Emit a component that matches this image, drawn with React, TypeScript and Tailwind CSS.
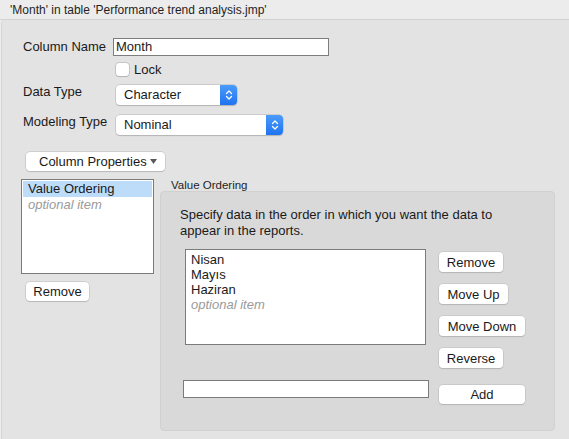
import React from 'react';

const font = { fontFamily: '"Liberation Sans", Arial, sans-serif' };

const Button: React.FC<{ label: string; className?: string }> = ({ label, className = '' }) => (
  <button
    className={`flex items-center justify-center rounded-[4px] bg-white text-[13px] leading-none text-[#1a1a1a] shadow-[0_0_0_0.5px_#b9b9b9,0_1px_1px_rgba(0,0,0,0.18)] ${className}`}
  >
    {label}
  </button>
);

const Select: React.FC<{ value: string; className?: string }> = ({ value, className = '' }) => (
  <div
    className={`flex h-[20px] items-stretch overflow-hidden rounded-[4px] bg-white shadow-[0_0_0_0.5px_#b4b4b4,0_1px_1px_rgba(0,0,0,0.2)] ${className}`}
  >
    <span className="flex flex-1 items-center pl-[8px] text-[13px] text-[#1a1a1a]">{value}</span>
    <span className="flex w-[17px] items-center justify-center bg-gradient-to-b from-[#4a9bfa] to-[#1f73f0]">
      <svg width="8" height="12" viewBox="0 0 8 12" fill="none">
        <path d="M1.5 4.5 4 2l2.5 2.5M1.5 7.5 4 10l2.5-2.5" stroke="white" strokeWidth="1.3" strokeLinecap="round" strokeLinejoin="round" />
      </svg>
    </span>
  </div>
);

const App: React.FC = () => {
  return (
    <div className="h-[439px] w-[569px] overflow-hidden bg-[#ececec]" style={font}>
      {/* title */}
      <div className="flex h-[20px] items-center border-b border-[#d2d2d2] pl-[10px] text-[12px] text-[#1f1f1f]">
        'Month' in table 'Performance trend analysis.jmp'
      </div>

      {/* main panel */}
      <div className="ml-[1px] h-[419px] rounded-tl-[4px] border-l border-[#d6d6d6] bg-[#e3e3e3] pl-[21px] pt-[18px] text-[13px] text-[#1a1a1a]">
        <div className="flex h-[18px] items-center">
          <span className="w-[90px]">Column Name</span>
          <div className="flex h-[18px] w-[216px] items-center border border-[#7d7d7d] bg-white pl-[2px]">Month</div>
        </div>

        <div className="mt-[7px] flex items-center pl-[93px]">
          <span className="h-[13px] w-[13px] rounded-[3px] bg-white shadow-[0_0_0_0.5px_#a9a9a9,0_1px_1px_rgba(0,0,0,0.15)]" />
          <span className="ml-[5px] leading-[13px]">Lock</span>
        </div>

        <div className="mt-[9px] flex items-start">
          <span className="w-[93px] leading-[13px]">Data Type</span>
          <Select value="Character" className="w-[121px]" />
        </div>

        <div className="mt-[10px] flex items-start">
          <span className="w-[93px] leading-[13px]">Modeling Type</span>
          <Select value="Nominal" className="w-[167px]" />
        </div>

        <div className="ml-[3px] mt-[17px] flex h-[19px] w-[139px] items-center rounded-[4px] bg-white pl-[13px] shadow-[0_0_0_0.5px_#b9b9b9,0_1px_1px_rgba(0,0,0,0.18)]">
          <span>Column Properties</span>
          <svg className="ml-[3px]" width="7" height="5" viewBox="0 0 7 5">
            <path d="M0 0h7L3.5 5z" fill="#5a5a5a" />
          </svg>
        </div>

        <div className="mt-[8px] flex">
          {/* left list */}
          <div className="-ml-[2px] flex flex-col">
            <div className="h-[95px] w-[133px] border border-[#7b7b7b] bg-white p-[1px]">
              <div className="flex h-[16px] items-center bg-[#bcdcfa] pl-[5px]">Value Ordering</div>
              <div className="flex h-[15px] items-center pl-[5px] italic text-[#9a9a9a]">optional item</div>
            </div>
            <Button label="Remove" className="ml-[5px] mt-[8px] h-[19px] w-[63px]" />
          </div>

          {/* right group */}
          <div className="ml-[6px] flex flex-col">
            <span className="pl-[11px] text-[11.5px] leading-[12px] text-[#1f1f1f]">Value Ordering</span>
            <div className="h-[240px] w-[395px] rounded-[4px] border border-[#d0d0d0] bg-[#d9d9d9] px-[19px] pt-[15px]">
              <p className="leading-[16px]">
                Specify data in the order in which you want the data to
                <br />
                appear in the reports.
              </p>

              <div className="mt-[10px] flex items-start">
                <div className="ml-[5px] h-[96px] w-[241px] border border-[#7b7b7b] bg-white pl-[5px] pt-[2px]">
                  <div className="flex h-[15px] items-center">Nisan</div>
                  <div className="flex h-[15px] items-center">Mayıs</div>
                  <div className="flex h-[15px] items-center">Haziran</div>
                  <div className="flex h-[15px] items-center italic text-[#9a9a9a]">optional item</div>
                </div>
                <div className="ml-[13px] mt-[3px] flex flex-col items-start gap-[12px]">
                  <Button label="Remove" className="h-[20px] w-[64px]" />
                  <Button label="Move Up" className="h-[20px] w-[69px]" />
                  <Button label="Move Down" className="h-[20px] w-[86px]" />
                  <Button label="Reverse" className="h-[20px] w-[64px]" />
                </div>
              </div>

              <div className="mt-[12px] flex items-start">
                <div className="ml-[3px] h-[18px] w-[246px] border border-[#7b7b7b] bg-white" />
                <Button label="Add" className="ml-[10px] mt-[5px] h-[19px] w-[86px]" />
              </div>
            </div>
          </div>
        </div>
      </div>
    </div>
  );
};

export default App;
